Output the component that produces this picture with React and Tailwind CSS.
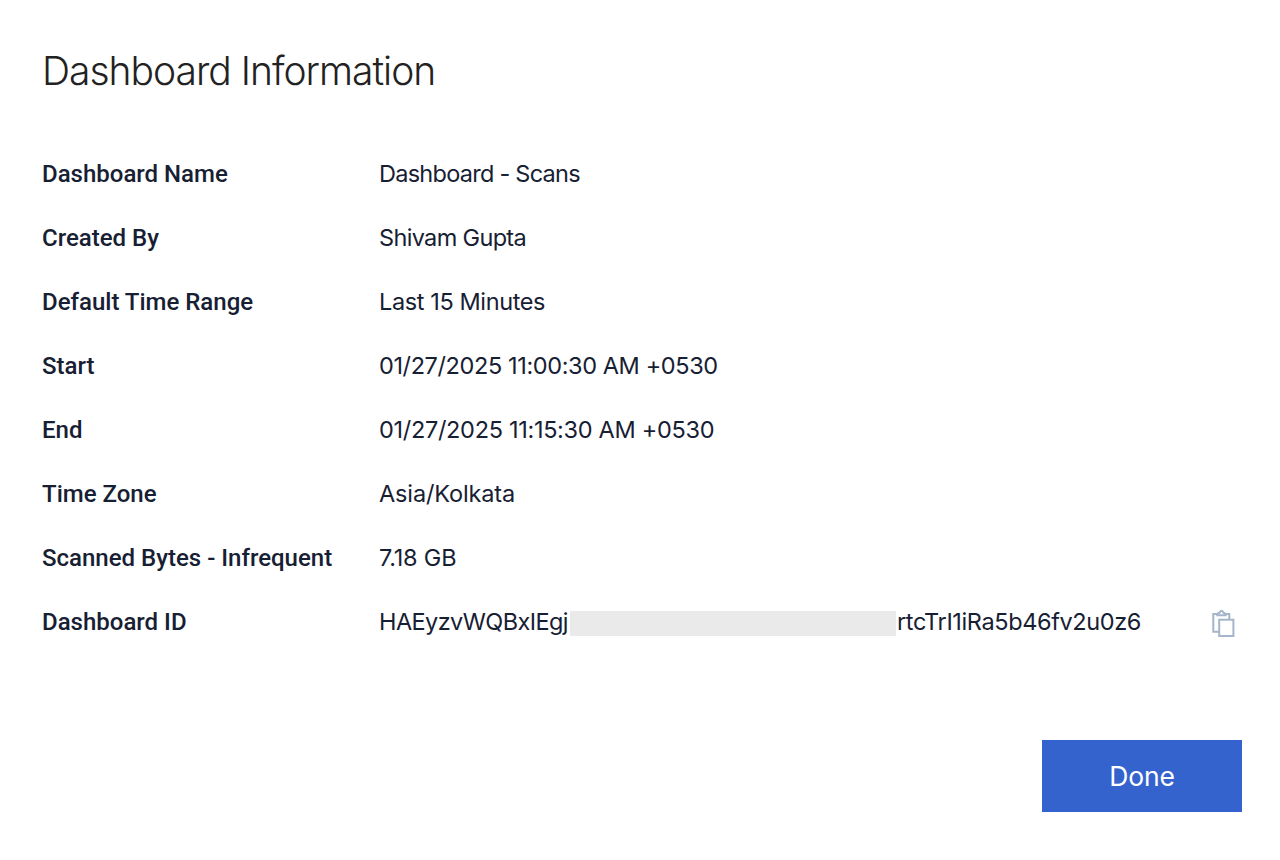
import React from "react";

const rows = [
  { label: "Dashboard Name", value: "Dashboard - Scans", spacing: "tracking-[-0.74px]" },
  { label: "Created By", value: "Shivam Gupta", spacing: "tracking-[-0.66px]" },
  { label: "Default Time Range", value: "Last 15 Minutes", spacing: "tracking-[-0.39px]" },
  { label: "Start", value: "01/27/2025 11:00:30 AM +0530", spacing: "tracking-[-0.39px]" },
  { label: "End", value: "01/27/2025 11:15:30 AM +0530", spacing: "tracking-[-0.31px]" },
  { label: "Time Zone", value: "Asia/Kolkata", spacing: "tracking-[-0.14px]" },
  { label: "Scanned Bytes - Infrequent", value: "7.18 GB", spacing: "tracking-[-0.2px]" },
];

function CopyIcon() {
  return (
    <svg width="24" height="30" viewBox="0 0 24 30" fill="none" stroke="#a5b5ca" strokeWidth="2">
      <path d="M7 22.7H1.3V5H5.5M13.5 5H17.3V10" />
      <path d="M5.3 6.3V4.8L7.8 3.5C8.2 1.2 10.8 1.2 11.2 3.5L13.7 4.8V6.3Z" />
      <rect x="7.2" y="10.7" width="14.2" height="16.3" />
    </svg>
  );
}

function Row({ label, children }) {
  return (
    <div className="flex h-16 items-center">
      <dt className="w-[337px] shrink-0 font-['Roboto',sans-serif] text-[24px] font-medium">{label}</dt>
      <dd className="flex grow items-center whitespace-nowrap">{children}</dd>
    </div>
  );
}

export default function App() {
  return (
    <main className="flex h-[860px] w-[1280px] flex-col bg-white pl-[42px] pr-[38px] pt-[48px] font-['Inter',sans-serif] text-[#172033]">
      <h1 className="h-12 self-start whitespace-nowrap text-[39px] font-light leading-[46px] tracking-[-1px] text-[#222222]">Dashboard Information</h1>
      <dl className="mt-[46px] flex flex-col text-[23.5px] leading-8">
        {rows.map((row) => (
          <Row key={row.label} label={row.label}>
            <span className={row.spacing}>{row.value}</span>
          </Row>
        ))}
        <Row label="Dashboard ID">
          <span className="w-[190.5px] tracking-[-0.58px]">HAEyzvWQBxIEgj</span>
          <span className="mt-[2px] h-[25px] w-[326px] bg-[#eaeaea]" />
          <span className="ml-[1.5px] tracking-[-0.38px]">rtcTrI1iRa5b46fv2u0z6</span>
          <button aria-label="Copy dashboard ID" className="ml-auto mr-[6px] mt-1"><CopyIcon /></button>
        </Row>
      </dl>
      <button className="mt-[86px] h-[72px] w-[200px] self-end bg-[#3563ce] pt-[2px] text-[26.5px] font-normal tracking-[-0.2px] text-white">Done</button>
    </main>
  );
}
